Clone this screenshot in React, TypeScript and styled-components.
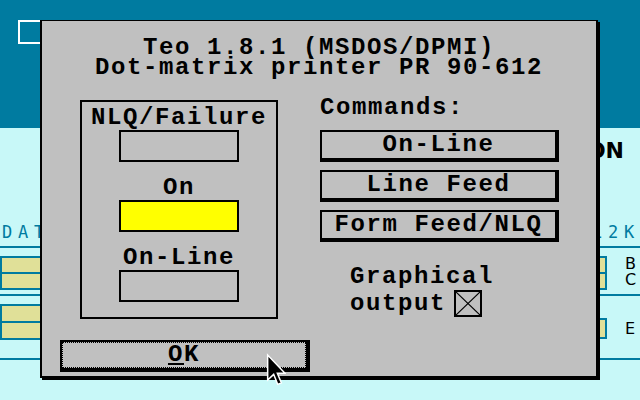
import React from "react";
import styled, { createGlobalStyle } from "styled-components";

const BLUE = "#007ba0";
const CYAN = "#c8f8f8";
const GRAY = "#c0c0c0";
const KHAKI = "#e0e098";

const GlobalStyle = createGlobalStyle`
  html, body { margin: 0; padding: 0; width: 640px; height: 400px; overflow: hidden; background: ${CYAN}; }
  #root { width: 640px; height: 400px; }
`;

const Screen = styled.div`
  position: relative;
  width: 640px;
  height: 400px;
  overflow: hidden;
  display: flex;
  flex-direction: column;
  background: ${CYAN};
`;

const TopBand = styled.div`
  height: 128px;
  flex: none;
  background: ${BLUE};
  padding: 20px 0 0 18px;
  box-sizing: border-box;
`;

const WindowIcon = styled.div`
  width: 26px;
  height: 24px;
  border: 2px solid #fff;
  box-sizing: border-box;
`;

const Desk = styled.div`
  flex: 1;
  display: flex;
  flex-direction: column;
`;

const BigTitle = styled.div`
  margin-top: 12px;
  height: 22px;
  text-align: right;
  padding-right: 16px;
  font: bold 22px/22px "DejaVu Sans", sans-serif;
  color: #000;
  white-space: nowrap;
`;

const LabelRow = styled.div`
  margin-top: 62px;
  height: 16px;
  display: flex;
  justify-content: space-between;
  font: 17px/16px "DejaVu Sans Mono", monospace;
  letter-spacing: 5.8px;
  color: ${BLUE};
  padding-left: 2px;
`;

const Rule = styled.div<{ $top: number }>`
  height: 2px;
  margin-top: ${(p) => p.$top}px;
  background: ${BLUE};
`;

const Section = styled.div<{ $h: number }>`
  height: ${(p) => p.$h}px;
  display: flex;
  justify-content: space-between;
  align-items: flex-start;
`;

const FieldBox = styled.div<{ $w: number; $top: number }>`
  width: ${(p) => p.$w}px;
  margin-top: ${(p) => p.$top}px;
  border: 2px solid ${BLUE};
  display: flex;
  flex-direction: column;
  gap: 2px;
  background: ${BLUE};
`;

const FieldCell = styled.div<{ $h: number }>`
  height: ${(p) => p.$h}px;
  background: ${KHAKI};
`;

const RightGroup = styled.div<{ $top: number }>`
  display: flex;
  margin-top: ${(p) => p.$top}px;
`;

const Letters = styled.div<{ $lh: number }>`
  margin-left: 18px;
  width: 15px;
  font: 16px/${(p) => p.$lh}px "DejaVu Sans", sans-serif;
  color: #000;
  white-space: pre;
`;

/* ---------------- dialog ---------------- */

const Dialog = styled.div`
  position: absolute;
  left: 40px;
  top: 20px;
  width: 558px;
  height: 358px;
  box-sizing: border-box;
  background: ${GRAY};
  border: 2px solid #000;
  border-top-width: 1px;
  box-shadow: 2px 2px 0 #000;
  display: flex;
  flex-direction: column;
  font-family: "Liberation Mono", "Courier New", monospace;
  font-weight: bold;
  font-size: 24px;
  line-height: 20px;
  letter-spacing: 1.6px;
  color: #000;
`;

const Title = styled.div`
  margin-top: 17px;
  text-align: center;
  white-space: pre;
`;

const Main = styled.div`
  margin-top: 20px;
  display: grid;
  grid-template-columns: 198px 239px;
  column-gap: 42px;
  padding-left: 38px;
  align-items: start;
`;

const GroupBox = styled.div`
  margin-top: 2px;
  border: 2px solid #000;
  padding: 6px 0 15px;
  display: flex;
  flex-direction: column;
  align-items: center;
`;

const FieldLabel = styled.div<{ $first?: boolean }>`
  margin-top: ${(p) => (p.$first ? 0 : 16)}px;
  height: 20px;
  white-space: pre;
`;

const Indicator = styled.div<{ $on?: boolean }>`
  margin-top: 2px;
  width: 120px;
  height: 32px;
  box-sizing: border-box;
  border: 2px solid #000;
  background: ${(p) => (p.$on ? "#ffff00" : GRAY)};
`;

const RightCol = styled.div`
  display: flex;
  flex-direction: column;
`;

const Heading = styled.div`
  height: 20px;
  white-space: pre;
`;

const ButtonStack = styled.div`
  margin-top: 12px;
  display: flex;
  flex-direction: column;
  gap: 8px;
`;

const CmdButton = styled.button`
  all: unset;
  box-sizing: border-box;
  height: 32px;
  width: 239px;
  border: 2px solid #000;
  border-right-width: 4px;
  border-bottom-width: 4px;
  background: ${GRAY};
  text-align: center;
  white-space: pre;
  font: inherit;
  letter-spacing: inherit;
  line-height: 26px;
`;

const OptionText = styled.div`
  margin-top: 25px;
  padding-left: 30px;
  height: 20px;
  white-space: pre;
`;

const OptionRow = styled.div`
  margin-top: 3px;
  padding-left: 30px;
  display: flex;
  align-items: center;
  height: 27px;
  white-space: pre;
`;

const CheckBox = styled.div`
  margin-left: 8px;
  width: 28px;
  height: 27px;
  box-sizing: border-box;
  border: 2px solid #000;
  display: flex;
  svg { display: block; }
`;

const OkButton = styled.button`
  all: unset;
  position: relative;
  box-sizing: border-box;
  margin: 21px 0 0 18px;
  width: 250px;
  height: 32px;
  border: 2px solid #000;
  border-right-width: 4px;
  border-bottom-width: 4px;
  background: ${GRAY};
  text-align: center;
  font: inherit;
  letter-spacing: inherit;
  line-height: 26px;
  &::after {
    content: "";
    position: absolute;
    inset: 0;
    border: 1px dotted #000;
  }
  u {
    text-decoration: underline;
    text-decoration-thickness: 2px;
    text-underline-offset: 2px;
  }
`;

const Pointer = styled.svg`
  position: absolute;
  left: 266px;
  top: 353px;
`;

export default function App() {
  return (
    <>
      <GlobalStyle />
      <Screen>
        <TopBand>
          <WindowIcon />
        </TopBand>
        <Desk>
          <BigTitle>ON</BigTitle>
          <LabelRow>
            <span>DAT</span>
            <span>12K</span>
          </LabelRow>
          <Rule $top={6} />
          <Section $h={46}>
            <FieldBox $w={60} $top={8}>
              <FieldCell $h={14} />
              <FieldCell $h={14} />
            </FieldBox>
            <RightGroup $top={8}>
              <FieldBox $w={20} $top={0}>
                <FieldCell $h={14} />
                <FieldCell $h={14} />
              </FieldBox>
              <Letters $lh={16}>{"B\nC"}</Letters>
            </RightGroup>
          </Section>
          <Rule $top={0} />
          <Section $h={62}>
            <FieldBox $w={60} $top={8}>
              <FieldCell $h={15} />
              <FieldCell $h={15} />
            </FieldBox>
            <RightGroup $top={22}>
              <FieldBox $w={20} $top={0}>
                <FieldCell $h={17} />
              </FieldBox>
              <Letters $lh={21}>E</Letters>
            </RightGroup>
          </Section>
          <Rule $top={0} />
        </Desk>

        <Dialog>
          <Title>{"Teo 1.8.1 (MSDOS/DPMI)\nDot-matrix printer PR 90-612"}</Title>
          <Main>
            <GroupBox>
              <FieldLabel $first>NLQ/Failure</FieldLabel>
              <Indicator />
              <FieldLabel>On</FieldLabel>
              <Indicator $on />
              <FieldLabel>On-Line</FieldLabel>
              <Indicator />
            </GroupBox>
            <RightCol>
              <Heading>Commands:</Heading>
              <ButtonStack>
                <CmdButton>On-Line</CmdButton>
                <CmdButton>Line Feed</CmdButton>
                <CmdButton>Form Feed/NLQ</CmdButton>
              </ButtonStack>
              <OptionText>Graphical</OptionText>
              <OptionRow>
                output
                <CheckBox>
                  <svg width="24" height="23" viewBox="0 0 24 23">
                    <line x1="0" y1="0" x2="24" y2="23" stroke="#000" strokeWidth="1.2" />
                    <line x1="24" y1="0" x2="0" y2="23" stroke="#000" strokeWidth="1.2" />
                  </svg>
                </CheckBox>
              </OptionRow>
            </RightCol>
          </Main>
          <OkButton>
            <u>O</u>K
          </OkButton>
        </Dialog>

        <Pointer width="20" height="34" viewBox="0 0 12 20">
          <path
            d="M1 1 L1 16 L4.6 12.6 L7 18.6 L9.2 17.7 L6.8 11.9 L11.4 11.9 Z"
            fill="#000"
            stroke="#fff"
            strokeWidth="0.9"
            strokeLinejoin="miter"
          />
        </Pointer>
      </Screen>
    </>
  );
}
